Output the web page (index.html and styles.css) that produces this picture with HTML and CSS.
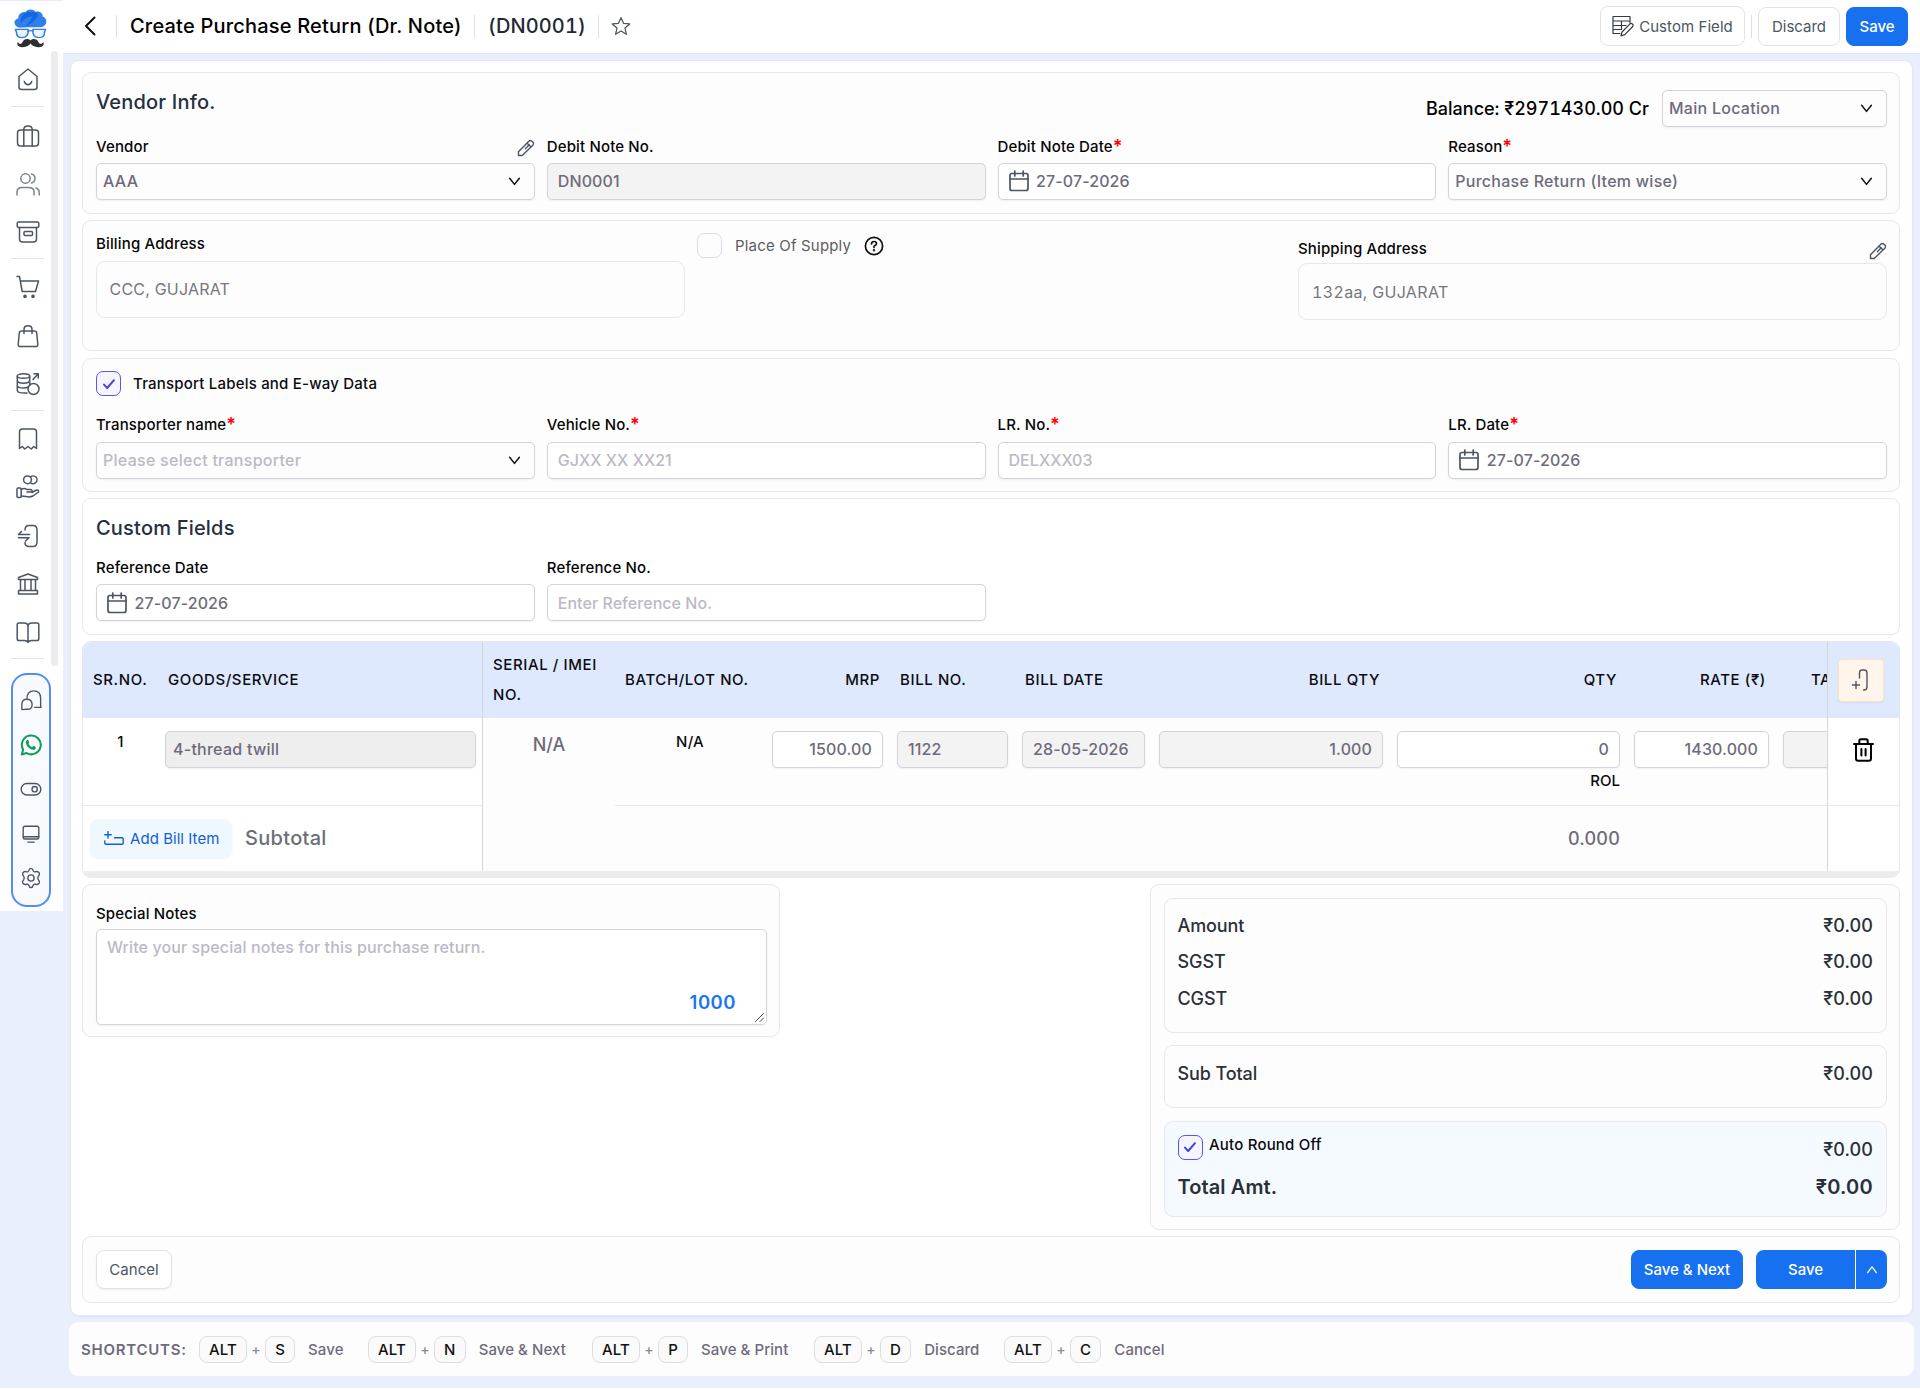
FILE: index.html
```html
<!DOCTYPE html>
<html lang="en">
<head>
<meta charset="utf-8">
<title>Create Purchase Return (Dr. Note)</title>
<link rel="stylesheet" href="styles.css">
</head>
<body>
<svg class="defs" width="0" height="0">
  <symbol id="chev" viewBox="0 0 14 10"><path d="M1.6 1.4 7 8.2 12.400 1.400"/></symbol>
  <symbol id="pen" viewBox="0 0 18 18"><path d="M1.500 16.500V12.800L11.800 2.200Q13.300.8 14.900 2.200L15.800 3.100Q17.200 4.600 15.800 6.200L5.200 16.500ZM10.200 4.200 13.800 7.800M8.300 9.700 12.200 5.800"/></symbol>
  <symbol id="cal" viewBox="0 0 20 22"><rect x="1" y="3.500" width="18" height="17" rx="2"/><path d="M1 9H19M5.800 1V6M14.200 1V6"/></symbol>
  <symbol id="tick" viewBox="0 0 14 14"><path d="M2 7.600 5.200 11 12 3.200"/></symbol>
</svg>
<div class="app">
  <aside class="side">
    <div class="logo">
      <svg width="33" height="39" viewBox="0 0 34 49" preserveAspectRatio="none">
        <path fill="#2f80ed" d="M4 23C-1 20-.5 13 4.500 11.500 4 6 9 3 12 4 13 0 20-.5 22 3.500 27 2 30 6 29.500 9.500 34 11 34.500 18 31 21 30 23 27 23 17 23 9 23 6 24 4 23Z"/>
        <path fill="#1567e0" d="M7 18C5 10 12 2 17 4 21 3 27 5 24 10 21 16 14 21 12 22 16 16 18 12 19 9 13 10 9 14 7 18Z"/>
        <g fill="#eaf3ff" stroke="#2f7fe8" stroke-width="1.600"><path d="M1.500 25.500H14.500Q15.500 36 8 36 2.500 36 2.500 29Z"/><path d="M32.500 25.500H19.500Q18.500 36 26 36 31.500 36 31.500 29Z"/><path d="M14.500 28Q17 26.500 19.500 28" fill="none"/></g>
        <path fill="#2e2e2e" d="M17 39.500C15 36.500 10 37 8.500 42 7.500 44.500 5 44.500 4 41.500 2 45 5 48.500 9 48 13 48 16 45.500 17 43.500 18 45.500 21 48 25 48 29 48.500 32 45 30 41.500 29 44.500 26.500 44.500 25.500 42 24 37 19 36.500 17 39.500Z"/>
      </svg>
    </div>
    <nav class="nav">
      <span class="it"><svg viewBox="0 0 24 24"><path d="M3 9.500 12 2 21 9.500V20Q21 22.500 18.500 22.500H5.500Q3 22.500 3 20ZM8.300 14.500Q9.500 17.800 12 17.800T15.700 14.500"/></svg></span>
      <hr class="first">
      <span class="it"><svg viewBox="0 0 24 24"><rect x="1.500" y="6" width="21" height="16" rx="3"/><path d="M7.800 22V5.500Q7.800 2 12 2T16.200 5.500V22"/></svg></span>
      <span class="it lite"><svg viewBox="0 0 24 24"><circle cx="9.500" cy="6.500" r="4.700"/><path d="M15.500 2Q19 3 19 6.500T15.500 11M1 23V20Q1 15.500 6 15.500H12.500Q18 15.500 18 20V23M20 16Q23.300 17 23.300 21V23"/></svg></span>
      <span class="it"><svg viewBox="0 0 24 24"><rect x="1.200" y="2" width="21.600" height="5.500" rx="1.500"/><path d="M3.500 7.500V19Q3.500 22 6.500 22H17.500Q20.500 22 20.500 19V7.500"/><rect x="8" y="11.500" width="8.500" height="4" rx="1"/></svg></span>
      <hr>
      <span class="it"><svg viewBox="0 0 24 24"><path d="M1 1.500H3.500L6.200 16.500H19.500L22.500 6H4.500"/><circle cx="9" cy="21.300" r="1.100" fill="#4b5563"/><circle cx="17" cy="21.300" r="1.100" fill="#4b5563"/></svg></span>
      <span class="it"><svg viewBox="0 0 24 24"><path d="M5.500 7H18.500Q20.500 7 20.700 9L21.800 20Q22 22.600 19.500 22.600H4.500Q2 22.600 2.200 20L3.300 9Q3.500 7 5.500 7ZM8 9.500V5.500Q8 1.800 12 1.800T16 5.500V9.500"/></svg></span>
      <span class="it"><svg viewBox="0 0 24 24"><ellipse cx="7.500" cy="4" rx="6.200" ry="2.300"/><path d="M1.300 4V18.500Q1.300 21.500 11 21M13.700 4V13M1.300 8.800Q2 11.200 7.500 11.200T13.700 8.800M1.300 13.600Q2 16 7.500 16 10 16 12 15.300"/><circle cx="17.500" cy="17" r="5.500"/><path d="M17 7.500 22 2M18 1.800H22.300V6"/></svg></span>
      <hr>
      <span class="it"><svg viewBox="0 0 24 24"><path d="M3.500 21.500V5Q3.500 2 6.500 2H17.500Q20.500 2 20.500 5V21.500L17.700 19.500 15.300 22 12 19.500 8.700 22 6.300 19.500Z"/></svg></span>
      <span class="it"><svg viewBox="0 0 24 24"><circle cx="11.500" cy="4.800" r="3.900"/><path d="M14.500 1.900A3.900 3.900 0 1 1 14.500 7.700"/><rect x="1" y="13" width="4.200" height="9.500" rx="1"/><path d="M5.200 14.500Q8 12.500 11 14.500H14.500Q16.500 14.700 16 17H11M16 17.500 20.500 15Q23 14.500 22.500 17L17 21Q14 22.500 10 21.500L5.200 21"/></svg></span>
      <span class="it"><svg viewBox="0 0 24 24"><path d="M9 6Q9 1.500 13 1.500H17Q21 1.500 21 6V18Q21 22.500 17 22.500H13Q9 22.500 9 18.500M5.500 7.500 2.500 10.500H13.500M9.500 17 13 13.800H2.500"/></svg></span>
      <span class="it"><svg viewBox="0 0 24 24"><path d="M2.500 7.500V5.500L12 2 21.500 5.500V7.500ZM2.500 22V19Q2.500 18.500 3 18.500H21Q21.500 18.500 21.500 19V22ZM4.500 7.500V18.500M9 7.500V18.500M15 7.500V18.500M19.500 7.500V18.500"/></svg></span>
      <span class="it"><svg viewBox="0 0 24 24"><path d="M12 22.500Q11 20.500 8.500 20.500H3Q1.200 20.500 1.200 18.700V4.800Q1.200 3 3 3H8Q12 3 12 6.500V22.500Q13 20.500 15.500 20.500H21Q22.800 20.500 22.800 18.700V4.800Q22.800 3 21 3H16Q12 3 12 6.500"/></svg></span>
      <hr>
    </nav>
    <div class="rail"></div>
    <div class="pill">
      <svg viewBox="0 0 24 24"><path d="M7.500 11Q7.500 2 15 2 22.500 2 22.500 10V18.500L23 20H16M2 22.500V16.500Q2 11.200 7.500 11.200T13.200 16.800 7.500 22Z"/></svg>
      <svg viewBox="0 0 24 24"><path d="M2 22.300 3.400 17A10.300 10.300 0 1 1 7.200 20.800Z" fill="none" stroke="#0f9d58" stroke-width="2.200"/><path fill="#0f9d58" stroke="none" d="M7.300 6.800Q8.500 5.800 9.300 7.200L10 9Q10 9.600 9.200 10.600 10.500 13.200 13.200 14.400L14.400 13.100Q15 12.800 17.200 14.200 17.600 15.500 16.500 16.600 14.300 18.200 10.500 15.700 6.500 12.500 6.300 9.500 6.300 8 7.300 6.800Z"/></svg>
      <svg viewBox="0 0 24 24"><rect x="1.300" y="6" width="21.400" height="12.500" rx="6.200"/><circle cx="16" cy="12.200" r="2.900"/></svg>
      <svg viewBox="0 0 24 24"><rect x="3.500" y="3.500" width="17" height="14" rx="2"/><path d="M3.500 15H20.500M8.500 20.800H15.500"/></svg>
      <svg viewBox="0 0 24 24"><circle cx="12" cy="12" r="3.400"/><path d="M12 1.500Q13.800 1.500 14.600 4.300 15.200 5.600 16.800 5.200 19.500 4.300 21 6.500 21.800 8.500 20 10.200 18.700 12 20 13.800 21.800 15.500 21 17.500 19.500 19.700 16.800 18.800 15.200 18.400 14.600 19.700 13.800 22.500 12 22.500T9.400 19.700Q8.800 18.400 7.200 18.800 4.500 19.700 3 17.500 2.200 15.500 4 13.800 5.300 12 4 10.200 2.200 8.500 3 6.500 4.500 4.300 7.200 5.200 8.800 5.600 9.400 4.300 10.200 1.500 12 1.500Z"/></svg>
    </div>
  </aside>

  <div class="body">
    <header class="top">
      <svg class="back" viewBox="0 0 12 20"><path d="M10.500 1.500 2 10 10.500 18.500"/></svg>
      <i class="bar b1"></i>
      <h1>Create Purchase Return (Dr. Note)</h1>
      <i class="bar b2"></i>
      <span class="num">(DN0001)</span>
      <i class="bar b3"></i>
      <svg class="star" viewBox="0 0 24 24"><path d="M12 2 15 8.800 22.500 9.500 16.800 14.500 18.500 22 12 18 5.500 22 7.200 14.500 1.500 9.500 9 8.800Z"/></svg>
      <div class="acts">
        <button class="btn cf"><svg viewBox="0 0 22 22"><path d="M18 8V1.500H1V18.500H8M1 6H18M1 10.500H14M1 14.500H9.500M9.500 6V14"/><path d="M9 20.800 10 17 18 8.800Q19.200 8 20.400 9T20.700 11.500L12.800 19.700Z"/></svg><span>Custom Field</span></button>
        <i class="bar"></i>
        <button class="btn dis">Discard</button>
        <button class="btn pri sv">Save</button>
      </div>
    </header>

    <main class="page">
      <section class="card vendor">
        <div class="vhead">
          <h2>Vendor Info.</h2>
          <div class="vr"><span class="bal">Balance: ₹2971430.00 Cr</span>
          <div class="fld sel loc"><span>Main Location</span><svg><use href="#chev"/></svg></div></div>
        </div>
        <div class="grid">
          <div><div class="lab"><span>Vendor</span><svg class="pen"><use href="#pen"/></svg></div><div class="fld sel"><span>AAA</span><svg><use href="#chev"/></svg></div></div>
          <div><div class="lab"><span>Debit Note No.</span></div><div class="fld off"><span>DN0001</span></div></div>
          <div><div class="lab"><span>Debit Note Date</span><b>*</b></div><div class="fld date"><svg><use href="#cal"/></svg><span>27-07-2026</span></div></div>
          <div><div class="lab"><span>Reason</span><b>*</b></div><div class="fld sel"><span>Purchase Return (Item wise)</span><svg><use href="#chev"/></svg></div></div>
        </div>
      </section>

      <section class="card addr">
        <div><div class="lab"><span>Billing Address</span></div><div class="abox bill">CCC, GUJARAT</div></div>
        <div class="pos"><span class="chk"></span><span class="pt">Place Of Supply</span><svg viewBox="0 0 20 20"><circle cx="10" cy="10" r="8.600"/><path d="M7.500 8Q7.500 5.500 10 5.500T12.500 7.800Q12.500 9.200 10 10.200V11.500"/><circle cx="10" cy="14.200" r=".4"/></svg></div>
        <div class="ship"><div class="lab"><span>Shipping Address</span><svg class="pen"><use href="#pen"/></svg></div><div class="abox">132aa, GUJARAT</div></div>
      </section>

      <section class="card trans">
        <div class="tchk"><span class="chk on"><svg><use href="#tick"/></svg></span><span>Transport Labels and E-way Data</span></div>
        <div class="grid">
          <div><div class="lab"><span>Transporter name</span><b>*</b></div><div class="fld sel ph"><span>Please select transporter</span><svg><use href="#chev"/></svg></div></div>
          <div><div class="lab"><span>Vehicle No.</span><b>*</b></div><div class="fld ph"><span>GJXX XX XX21</span></div></div>
          <div><div class="lab"><span>LR. No.</span><b>*</b></div><div class="fld ph"><span>DELXXX03</span></div></div>
          <div><div class="lab"><span>LR. Date</span><b>*</b></div><div class="fld date"><svg><use href="#cal"/></svg><span>27-07-2026</span></div></div>
        </div>
      </section>

      <section class="card cust">
        <h2>Custom Fields</h2>
        <div class="grid">
          <div><div class="lab"><span>Reference Date</span></div><div class="fld date"><svg><use href="#cal"/></svg><span>27-07-2026</span></div></div>
          <div><div class="lab"><span>Reference No.</span></div><div class="fld ph"><span>Enter Reference No.</span></div></div>
        </div>
      </section>

      <section class="tbl">
        <div class="row head">
          <div class="c">SR.NO.</div><div class="c vl">GOODS/SERVICE</div>
          <div class="c">SERIAL / IMEI NO.</div><div class="c">BATCH/LOT NO.</div>
          <div class="c r">MRP</div><div class="c">BILL NO.</div><div class="c">BILL DATE</div><div class="c r">BILL QTY</div><div class="c r">QTY</div><div class="c r">RATE (₹)</div><div class="c tax">TAX</div>
          <div class="c fix"><span class="addcol"><svg viewBox="0 0 20 24"><path d="M8.500 10V5Q8.500 2 11 2H13Q16 2 16 5V19Q16 22 13 22H12.500M5 13.500V20.500M1.500 17H8.500"/></svg></span></div>
        </div>
        <div class="row item">
          <div class="c ctr">1</div>
          <div class="c vl"><div class="fld goods">4-thread twill</div></div>
          <div class="c na">N/A</div>
          <div class="c ctr">N/A</div>
          <div class="c"><div class="fld r">1500.00</div></div>
          <div class="c"><div class="fld off">1122</div></div>
          <div class="c"><div class="fld off">28-05-2026</div></div>
          <div class="c"><div class="fld off r">1.000</div></div>
          <div class="c"><div class="fld r">0</div><div class="rol">ROL</div></div>
          <div class="c"><div class="fld r">1430.000</div></div>
          <div class="c taxin"><div class="fld off"></div></div>
          <div class="c fix"><svg class="trash" viewBox="0 0 21 24"><path d="M1 6H20M3 6V20.500Q3 22.700 5.200 22.700H15.800Q18 22.700 18 20.500V6M6.300 6V3Q6.300 1.300 8 1.300H13Q14.700 1.300 14.700 3V6M8.400 11V17.500M12.600 11V17.500"/></svg></div>
        </div>
        <div class="row foot">
          <div class="c vl sub"><button class="add"><svg viewBox="0 0 20 14"><path d="M4 .5V7M.8 3.800H7.200M.8 10V12Q.8 13.200 2 13.200H18Q19.200 13.200 19.200 12V8Q19.200 6.800 18 6.800H10.500"/></svg><span>Add Bill Item</span></button><span class="st">Subtotal</span></div>
          <div class="c tot">0.000</div>
          <div class="c fix"></div>
        </div>
        <div class="hscroll"></div>
      </section>

      <div class="lower">
        <section class="card notes">
          <div class="lab"><span>Special Notes</span></div>
          <div class="ta"><span>Write your special notes for this purchase return.</span><em>1000</em><svg viewBox="0 0 10 10"><path d="M.5 9.500 9.500.5M5.500 9.500 9.500 5.500"/></svg></div>
        </section>
        <section class="card sum">
          <div class="box b-a"><p><span>Amount</span><span class="v">₹0.00</span></p><p><span>SGST</span><span class="v">₹0.00</span></p><p><span>CGST</span><span class="v">₹0.00</span></p></div>
          <div class="box b-s"><p><span>Sub Total</span><span class="v">₹0.00</span></p></div>
          <div class="box b-t"><div class="ar"><span class="chk on"><svg><use href="#tick"/></svg></span><span class="at">Auto Round Off</span><span class="v">₹0.00</span></div><p class="big"><span>Total Amt.</span><span class="v">₹0.00</span></p></div>
        </section>
      </div>

      <section class="card fin">
        <button class="btn can">Cancel</button>
        <div class="fr"><button class="btn pri sn">Save &amp; Next</button><div class="split"><span>Save</span><i><svg viewBox="0 0 14 10"><path d="M2 8.500 7 2 12 8.500"/></svg></i></div></div>
      </section>
    </main>

    <footer class="keys">
      <strong>SHORTCUTS:</strong>
      <div class="k k1"><kbd>ALT</kbd><u>+</u><kbd>S</kbd><span>Save</span></div>
      <div class="k k2"><kbd>ALT</kbd><u>+</u><kbd>N</kbd><span>Save &amp; Next</span></div>
      <div class="k k3"><kbd>ALT</kbd><u>+</u><kbd>P</kbd><span>Save &amp; Print</span></div>
      <div class="k k4"><kbd>ALT</kbd><u>+</u><kbd>D</kbd><span>Discard</span></div>
      <div class="k k5"><kbd>ALT</kbd><u>+</u><kbd>C</kbd><span>Cancel</span></div>
    </footer>
  </div>
</div>
</body>
</html>
```
FILE: styles.css
```css
*{box-sizing:border-box}
html{background:#fff}
body{margin:0;width:1920px;height:1390px;overflow:hidden;font-family:Inter,"Noto Sans",sans-serif;font-size:15px;color:#0b0b0f;font-weight:500;letter-spacing:.2px}
svg{fill:none;stroke:#4b5563;stroke-width:1.5;stroke-linecap:round;stroke-linejoin:round;flex:none}
.defs{position:absolute}
h1,h2,p{margin:0;font-weight:500}
button{font:inherit;letter-spacing:0}
.app{display:flex;height:1388px;background:#e9effd}
.side{position:relative;width:63px;height:911px;background:#fff;flex:none;border-top:1px solid #e4ebfb}
.logo{height:54px;padding:8px 0 0 14px}
.logo svg{display:block;stroke:none}
.nav{width:55px;padding-left:11px}
.it{display:flex;width:34px;height:48.400px;align-items:center;justify-content:center}
.it svg{width:24px;height:24px}
.it.lite svg{stroke:#7b8290}
.nav hr{width:33px;height:1px;margin:1.500px 0 4px;border:0;background:#e3e4e7}
.nav hr.first{margin:2.500px 0 4.500px}
.rail{position:absolute;left:51px;top:50px;width:7px;height:615px;border-radius:4px;background:#ececec}
.pill{position:absolute;left:11px;top:672px;width:40px;height:234px;border:2px solid #4f8df9;border-radius:16px;background:#f9fafd;display:flex;flex-direction:column;align-items:center;padding-top:14px;gap:22.500px}
.pill svg{width:22px;height:22px}
.body{flex:1;display:flex;flex-direction:column}
.top{height:53px;padding-bottom:1px;background:#fff;display:flex;align-items:center;box-shadow:0 1px 2px rgba(30,60,140,.06)}
.bar{width:1px;height:23px;background:#dedfe3}
.back{width:12px;height:20px;margin-left:20.500px;stroke:#111;stroke-width:2}
.b1{margin-left:20.500px}
h1{font-size:20px;letter-spacing:.2px;margin-left:13px;color:#000;white-space:nowrap}
.b2{margin-left:12px}.b3{margin-left:12px}
.num{font-size:20px;letter-spacing:.1px;margin-left:13.500px;color:#1f2937;font-variant-numeric:tabular-nums}
.star{width:20px;height:20px;margin-left:12.500px}
.acts{margin-left:auto;margin-right:12px;display:flex;align-items:center}
.btn{height:39px;border:1px solid #e3e3e6;border-radius:8px;background:#fff;color:#4b5563;display:flex;align-items:center;justify-content:center;padding:0;white-space:nowrap}
.cf{width:145px;height:40px;gap:5px;margin-right:6px;font-weight:400;letter-spacing:.07px}
.cf svg{width:22px;height:22px;stroke:#333b47;stroke-width:1.200}
.dis{width:82px;margin-left:6px;font-weight:400}
.pri{background:#1670ef;border-color:#1670ef;color:#fff}
.sv{width:62px;margin-left:6px}
.page{margin:7px 0 0 7px;width:1843px;height:1256px;background:#fff;border:1px solid #e4e8f2;border-radius:9px;padding:11px 12px 11px 11px;box-shadow:0 1px 2px rgba(30,60,140,.05)}
.card{border:1px solid #e8e8ea;border-radius:9px;background:#fdfdfd}
.grid{display:grid;grid-template-columns:repeat(4,1fr);column-gap:12px}
.lab{height:24px;line-height:24px;display:flex;font-size:15px;letter-spacing:.15px;color:#050505}
.lab b{color:#f00;font-size:18px;font-weight:600}
.pen{width:18px;height:18px;margin:4px 0 0 auto;stroke-width:1.400}
.fld{height:37px;border:1px solid #d3d3da;border-radius:5px;background:#fff;box-shadow:0 1px 2px rgba(0,0,0,.06);display:flex;align-items:center;font-size:16px;color:#6e6b7b;padding:0 10px 1px;letter-spacing:.12px;white-space:nowrap}
.fld.off{background:#f3f3f3}
.fld.ph{color:#bbb9c5;letter-spacing:.05px}
.fld.sel{padding:0 13px 1px 6px;background:#fdfdfd;letter-spacing:.27px}
.fld.sel svg{width:13px;height:9px;margin-left:auto;stroke:#111;stroke-width:1.700}
.fld.r{justify-content:flex-end}
.date svg{width:20px;height:22px;stroke-width:1.700}
.date{gap:7.500px}
h2{font-size:20px;line-height:24px;color:#252f3f}
.vendor{height:142px;padding:17px 12px 0 13px}
.vhead{display:flex;justify-content:space-between;height:37px;margin-bottom:8px}
.vr{display:flex;align-items:center;gap:13px}
.bal{font-size:18px;letter-spacing:0;color:#000;font-variant-numeric:tabular-nums;padding-bottom:1px}
.loc{width:225px}
.vendor .lab{margin-bottom:4px}
.addr{height:131px;margin-top:6px;padding:10px 12px 0 13px;display:grid;grid-template-columns:repeat(3,1fr);column-gap:12px}
.addr .lab{line-height:25px}
.abox{height:57px;border:1px solid #e8e8ea;border-radius:9px;display:flex;align-items:center;padding-left:13px;color:#77777d;font-size:16px;font-weight:400}
.bill{margin-top:6px;padding:0 0 1px 12.500px}
.ship{padding-top:5px}.ship .lab{margin-bottom:3px}.ship .pen{margin-top:6px}
.ship .abox{font-variant-numeric:tabular-nums;letter-spacing:.35px}
.pos{display:flex;height:25px;margin-top:2px;align-items:center;color:#5e5e62;font-weight:400;letter-spacing:.18px}
.pos svg{width:20px;height:20px;stroke:#111;stroke-width:1.700;margin-left:13px}
.chk{width:25px;height:25px;border:1px solid #dcdce2;border-radius:7px;margin-right:13px;display:flex;align-items:center;justify-content:center;flex:none}
.chk.on{border-color:#5a57e6;background:#f6f5ff}
.chk svg{width:14px;height:14px;stroke:#4743e0;stroke-width:2}
.trans{height:134px;margin-top:7px;padding:12px 12px 0 13px}
.tchk{height:25px;display:flex;align-items:center;margin-bottom:17px;font-size:15px}
.tchk .chk{margin-right:12px}
.trans .lab{margin-bottom:5px}
.cust{height:137px;margin-top:6px;padding:17px 12px 0 13px;background:#fff}
.cust h2{margin-bottom:16px}
.cust .lab{margin-bottom:4px}
.cust .fld{padding-bottom:0}
.tbl{height:237px;margin-top:6px;border:1px solid #e6e6ea;border-bottom:0;border-radius:9px;overflow:hidden;background:#fdfdfd}
.row{display:grid;grid-template-columns:75px 325px 132px 150px 125px 125px 137px 238px 237px 149px 51px 72px}
.head{height:76px;background:#dee9fe;font-size:15px;line-height:30px;letter-spacing:.6px}
.head .c{padding:0 10px;display:flex;align-items:center;overflow:hidden;white-space:nowrap}
.head .c:nth-child(3){white-space:normal}
.c.r{justify-content:flex-end}
.vl{border-right:1px solid #d5d6dc}
.head .tax{padding-left:35px;padding-right:0}
.c.fix{border-left:1px solid #d5d6dc;background:#fff}
.head .fix{background:none}
.addcol{width:46px;height:43px;border:1px solid #ffe1c4;border-radius:4px;background:#fff5ea;display:flex;align-items:center;justify-content:center;flex:none;box-shadow:0 1px 2px rgba(0,0,0,.06)}
.addcol svg{width:20px;height:24px;stroke-width:1.400}
.item{height:88px}
.item .c{padding:13px 7px 0;border-bottom:1px solid #e7e7ec;overflow:hidden}
.item .vl{padding-right:6px}
.item .c:nth-child(-n+2){background:#fff}
.item .c.ctr{text-align:center;padding-top:14px;line-height:20px}
.item .c.na{text-align:center;border-bottom:0;font-size:18px;line-height:24px;padding-top:15px;color:#6e6b7b;letter-spacing:0}
.item .goods{background:#eee;padding-left:7px;letter-spacing:.25px}
.rol{text-align:right;line-height:24px;margin-top:1px;font-size:15px;letter-spacing:0}
.item .taxin{padding-right:0}
.taxin .fld{width:90px}
.trash{width:21px;height:24px;margin:7px 0 0 18px;stroke:#000;stroke-width:2}
.foot{height:65px;grid-template-columns:400px 1344px 72px}
.foot .c{display:flex;align-items:center}
.foot .sub{background:#fff;padding:0 0 1px 7px}
.add{width:142px;height:39px;border:0;border-radius:8px;background:#eff8ff;color:#1160d3;display:flex;align-items:center;padding:0 0 0 14px;gap:6px;font-size:15px;font-weight:400;letter-spacing:.05px;box-shadow:0 1px 2px rgba(0,0,0,.05)}
.add svg{width:20px;height:14px;stroke:#1160d3;stroke-width:1.400}
.st{font-size:20px;letter-spacing:.3px;color:#6b6e76;margin-left:13px}
.foot .tot{justify-content:flex-end;padding-right:207px;font-size:18px;color:#6e6b7b}
.hscroll{height:7px;background:#ececec}
.lower{display:flex;justify-content:space-between;margin-top:6px;height:346px}
.notes{width:698px;height:153px;padding:16px 12px 0 13px}
.notes .lab{margin-bottom:4px;line-height:25px}
.ta{position:relative;height:96px;border:1px solid #d3d3da;border-radius:5px;background:#fff;padding:7px 10px;font-size:16px;line-height:20px;letter-spacing:.1px;color:#bbb9c5;box-shadow:0 1px 2px rgba(0,0,0,.06)}
.ta em{position:absolute;right:30px;bottom:12px;font-style:normal;font-weight:600;font-size:18.500px;letter-spacing:.5px;color:#1a76f0}
.ta svg{position:absolute;right:2px;bottom:2px;width:9px;height:9px;stroke:#444;stroke-width:1.100}
.sum{width:750px;padding:13px 12px 0 13px;color:#2b3038}
.box{border:1px solid #e8e8ea;border-radius:9px;padding:0 13px 0 12.500px;font-size:18px;letter-spacing:-.1px}
.box p{display:flex;justify-content:space-between;line-height:24px;margin-bottom:12.500px}
.box .v{letter-spacing:.1px}
.b-a{height:135px;padding-top:14.500px}
.b-s{height:63px;padding-top:16px;margin-top:12px}
.b-t{height:96px;margin-top:13px;background:#f4faff;padding-top:12px}
.ar{display:flex;height:26px;align-items:center;margin-bottom:14.500px}
.ar .chk{margin-right:6.500px}
.at{font-size:15px;letter-spacing:.2px;color:#0b0b0f;align-self:flex-start;line-height:21px}
.ar .v{margin-left:auto;padding-top:4px}
.box .big{font-size:20px;font-weight:600;letter-spacing:.1px}
.big .v{letter-spacing:.25px}
.fin{height:67px;margin-top:6px;padding:13px 12px 13px 13px;display:flex;justify-content:space-between}
.can{width:76px;font-weight:400;letter-spacing:.05px;box-shadow:0 1px 2px rgba(0,0,0,.06)}
.fr{display:flex;gap:13px}
.sn{width:112px}
.split{width:131px;height:39px;border-radius:8px;background:#1670ef;color:#fff;display:flex;overflow:hidden;letter-spacing:0}
.split span{width:99px;display:flex;align-items:center;justify-content:center}
.split i{flex:1;border-left:1px solid #fff;display:flex;align-items:center;justify-content:center}
.split svg{width:12px;height:9px;stroke:#fff}
.keys{margin:6px 0 0 6px;width:1845px;height:54px;background:#fdfdfd;border-radius:9px;display:flex;align-items:center;padding-left:12px;color:#6e6b7b}
.keys strong{font-weight:600;width:118px;letter-spacing:.75px}
.k{display:flex;align-items:center}
.k span{margin-left:13px;white-space:nowrap;letter-spacing:.07px}
kbd{font:inherit;height:27px;min-width:30px;padding:0 9px;border:1px solid #dedee2;border-radius:8px;background:#fafafa;color:#111;display:flex;align-items:center;justify-content:center}
u{text-decoration:none;width:18px;text-align:center;font-size:14px;color:#8b8b95}
.k1{width:169px}.k2{width:224px}.k3{width:222px}.k4{width:190px}
```
